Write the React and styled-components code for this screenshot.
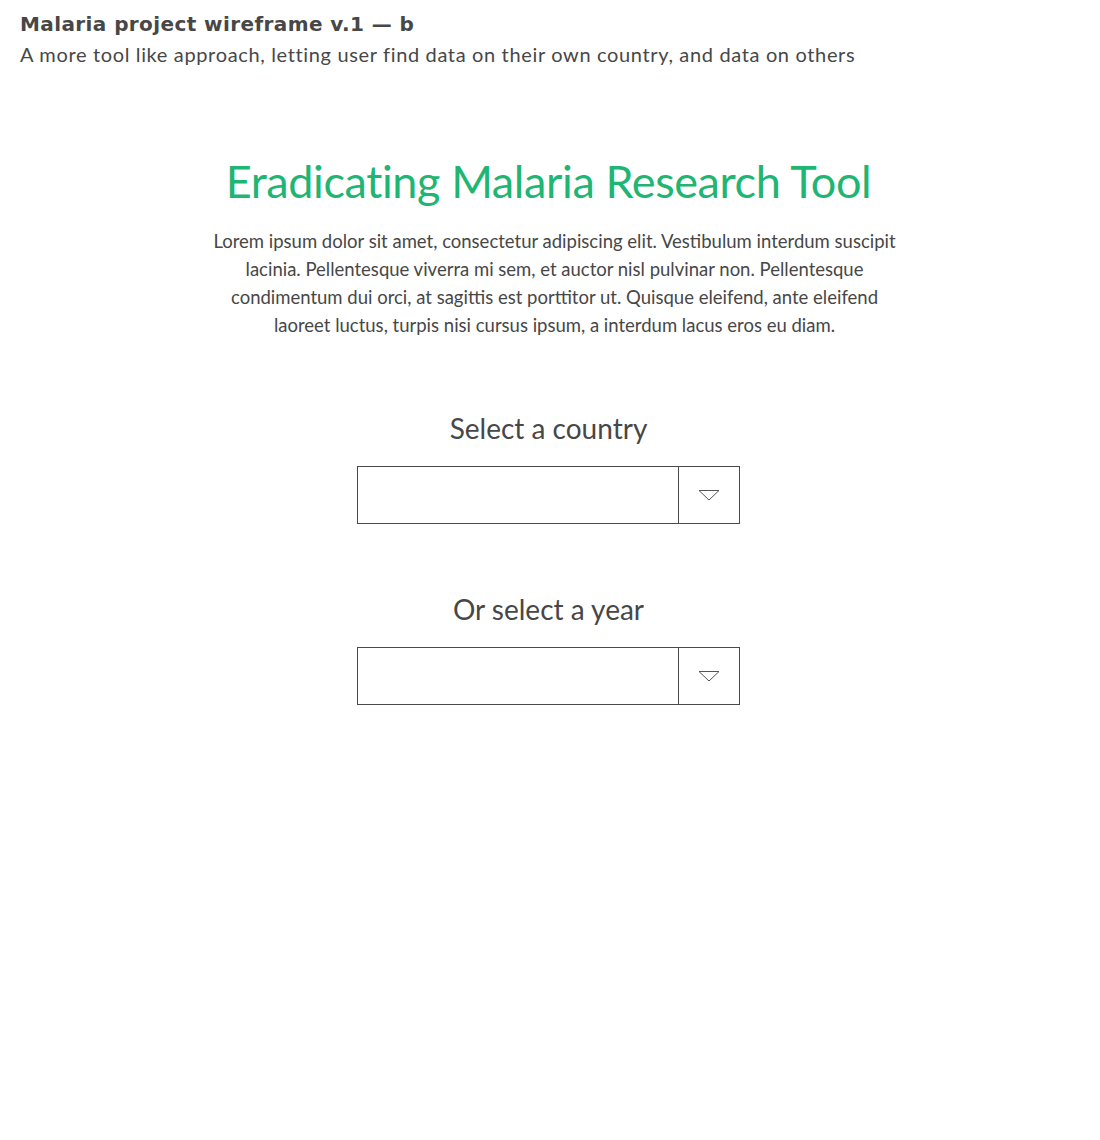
import styled, { createGlobalStyle } from 'styled-components'

const GlobalStyle = createGlobalStyle`
  html, body {
    margin: 0;
    padding: 0;
    background: #ffffff;
  }
  body {
    font-family: Lato, "Open Sans", "Liberation Sans", sans-serif;
    color: #464646;
  }
`

const Page = styled.div`
  width: 1100px;
  min-height: 1140px;
  box-sizing: border-box;
  padding: 10px 23px 0 20px;
`

const Header = styled.header`
  display: flex;
  flex-direction: column;
  gap: 3px;
`

const DocTitle = styled.h1`
  margin: 0;
  font-family: "DejaVu Sans", Lato, sans-serif;
  font-size: 20px;
  font-weight: 700;
  line-height: 28px;
  letter-spacing: 0.4px;
  color: #474747;
`

const DocSub = styled.p`
  margin: 0;
  font-size: 20px;
  line-height: 26px;
  letter-spacing: 0.65px;
  color: #474747;
`

const Main = styled.main`
  display: flex;
  flex-direction: column;
  align-items: center;
  padding-top: 84px;
`

const Title = styled.h2`
  margin: 0;
  font-size: 45px;
  font-weight: 400;
  line-height: 60px;
  color: #1fb573;
  letter-spacing: -0.4px;
`

const Intro = styled.p`
  margin: 16px 0 0 12px;
  width: 690px;
  text-align: center;
  font-size: 18.5px;
  line-height: 28px;
  color: #474747;
`

const Field = styled.div`
  display: flex;
  flex-direction: column;
  align-items: center;
  margin-top: ${p => p.first ? '71px' : '67px'};
`

const Label = styled.label`
  font-size: 28px;
  line-height: 36px;
  color: #474747;
  margin-bottom: 20px;
`

const Select = styled.div`
  display: flex;
  width: 383px;
  height: 58px;
  box-sizing: border-box;
  border: 1px solid #4a4a4a;
`

const Value = styled.div`
  flex: 1;
`

const Toggle = styled.div`
  width: 60px;
  border-left: 1px solid #4a4a4a;
  display: flex;
  align-items: center;
  justify-content: center;
`

function Caret() {
  return (
    <svg width="22" height="12" viewBox="0 0 22 12">
      <path d="M1 1.5 H21 L11 11 Z" fill="none" stroke="#555" strokeWidth="1" />
    </svg>
  )
}

function Dropdown({ label, first }) {
  return (
    <Field first={first}>
      <Label>{label}</Label>
      <Select>
        <Value />
        <Toggle><Caret /></Toggle>
      </Select>
    </Field>
  )
}

export default function App() {
  return (
    <Page>
      <GlobalStyle />
      <Header>
        <DocTitle>Malaria project wireframe v.1 — b</DocTitle>
        <DocSub>A more tool like approach, letting user find data on their own country, and data on others</DocSub>
      </Header>
      <Main>
        <Title>Eradicating Malaria Research Tool</Title>
        <Intro>
          Lorem ipsum dolor sit amet, consectetur adipiscing elit. Vestibulum interdum suscipit lacinia. Pellentesque viverra mi sem, et auctor nisl pulvinar non. Pellentesque condimentum dui orci, at sagittis est porttitor ut. Quisque eleifend, ante eleifend laoreet luctus, turpis nisi cursus ipsum, a interdum lacus eros eu diam.
        </Intro>
        <Dropdown label="Select a country" first />
        <Dropdown label="Or select a year" />
      </Main>
    </Page>
  )
}
